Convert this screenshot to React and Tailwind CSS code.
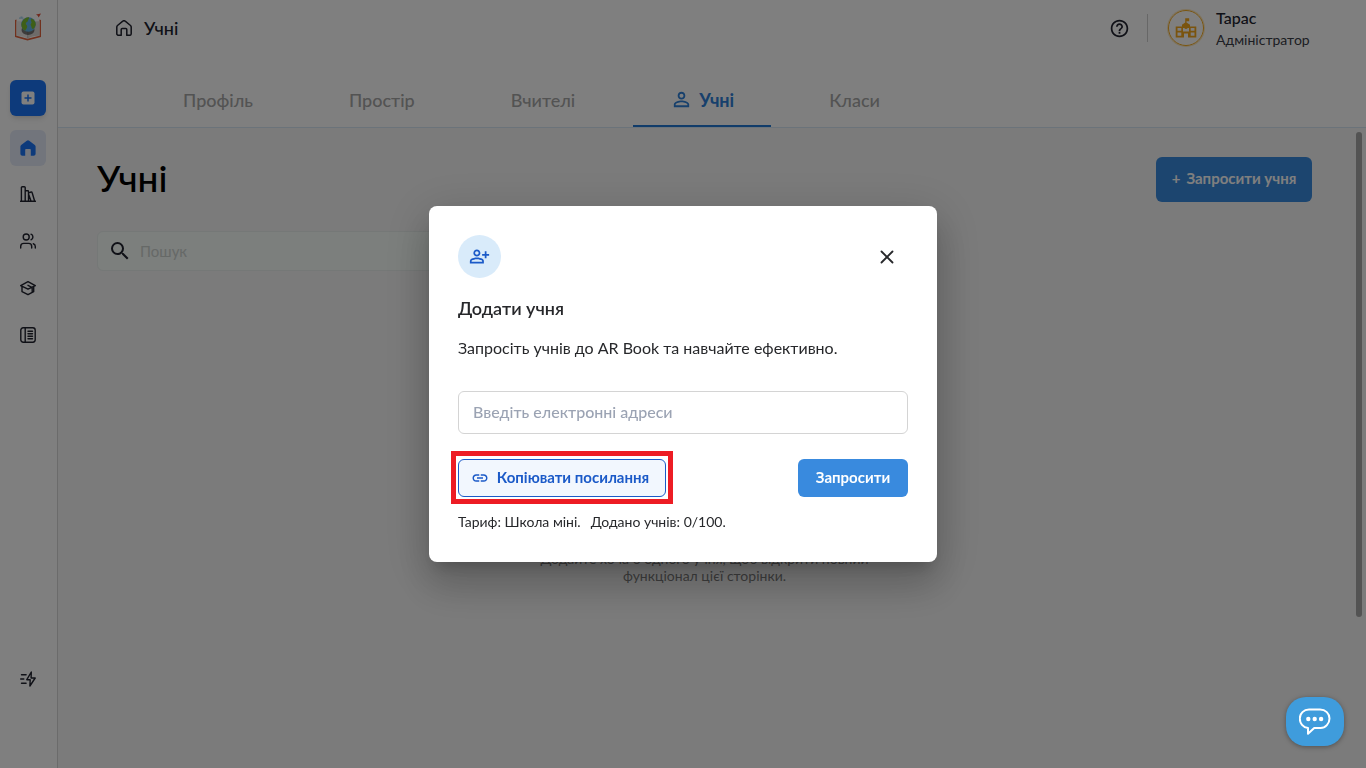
import React from 'react';
import { X } from 'lucide-react';
import {
  MdHelpOutline,
  MdLink,
  MdOutlinePersonAddAlt,
  MdPersonOutline,
  MdSearch,
} from 'react-icons/md';

function Logo() {
  return (
    <svg className="size-7" viewBox="0 0 28 28" aria-hidden="true">
      <path d="M1 7v17l12.500 3.500L27 24V7l-1.500-.5v16.300L13.500 25.800 2.500 22.800V6.500z" fill="#e2633c" />
      <path d="M2.500 8.500c4-.6 8 .5 11.200 3v14C10.500 23.500 6.500 22.300 2.500 22.800z" fill="#ece8e6" />
      <path d="M25.500 8.500c-4-.6-8.500.5-11.800 3v14c3.300-2 7.500-3.200 11.800-2.700z" fill="#dcd6d3" />
      <path d="M13.700 16v9.500" stroke="#b5aeaa" strokeWidth=".8" />
      <ellipse cx="14" cy="17" rx="6.500" ry="5" fill="#4a4a4a" opacity=".7" />
      <circle cx="14.500" cy="11.500" r="7.300" fill="#63b4e6" />
      <path d="M8 9c1.500-3 4-4.700 7-4.800.5 1.500-1 2-1 3.300 0 1.500-2 1.500-2.200 3-.2 1.300 1.700 1.500 1.400 3.300-.2 1.500-1.200 2.500-2 4C8 16 6.500 12.500 8 9z" fill="#7fbf2e" />
      <path d="M17.500 5.500c2.500 1 4.500 3.500 4.200 6.500-1 1.500-1 3.500-3 4-1.500-.5-1-2.500-2-3.700-.6-1.500 1.300-2 .8-3.300-.5-1-1.300-2 0-3.500z" fill="#7fbf2e" />
      <path d="M22 1.500l5-1-2.300 4-.9-1.800z" fill="#e2523c" />
      <path d="M5 5.200h4.500M6.500 4.200h2" stroke="#a9d3ea" strokeWidth="1.200" />
    </svg>
  );
}

function Line({ className = 'size-4', children, width = 1.4 }) {
  return (
    <svg
      className={className}
      viewBox="0 0 16 16"
      fill="none"
      stroke="currentColor"
      strokeWidth={width}
      strokeLinecap="round"
      strokeLinejoin="round"
      aria-hidden="true"
    >
      {children}
    </svg>
  );
}

const HOUSE =
  'M.8 7c0-.6.3-1.100.7-1.500L6.800 1.200c.7-.6 1.700-.6 2.400 0l5.300 4.300c.4.400.7.900.7 1.500v6.700c0 .9-.7 1.600-1.600 1.600h-2.800V9.500c0-.6-.4-1-1-1H6.200c-.6 0-1 .4-1 1v5.800H2.400c-.9 0-1.600-.7-1.600-1.600z';

const HomeSolid = () => (
  <svg className="size-4" viewBox="0 0 16 16" fill="currentColor" aria-hidden="true">
    <path d="M6.800.7a2 2 0 0 1 2.400 0l5.600 4.300c.5.400.8 1 .8 1.600v7.200c0 1.100-.9 2-2 2h-2.800V10c0-.6-.4-1-1-1H6.200c-.6 0-1 .4-1 1v5.800H2.400c-1.100 0-2-.9-2-2V6.600c0-.6.3-1.200.8-1.600z" />
  </svg>
);

const Books = () => (
  <Line>
    <path d="M.6 15.300h14.800M1.400 15V1.600c0-.5.4-.9.9-.9h2c.5 0 .9.400.9.900V15M5.200 4.700h2.600c.4 0 .7.300.7.700V15M8.600 6.800l2.600-.8c.4-.1.800.1.900.5L14.600 15M8.700 8.500l2.200 6.300" />
  </Line>
);

const Users = () => (
  <Line>
    <circle cx="6.200" cy="4" r="3" />
    <path d="M.7 15v-1.600c0-1.700 1.300-3 3-3h5c1.700 0 3 1.300 3 3V15M11 1.200a3 3 0 0 1 0 5.600M13.300 10.700c1.200.3 2 1.400 2 2.700V15" />
  </Line>
);

const Cap = () => (
  <Line>
    <path d="M.7 5.700 8 1.700l7.300 4L8 9.200zM2 6.500v5.200l6 3 5.700-3V6.500M8 5.300l4.200 2.200v4.200" />
  </Line>
);

const Journal = () => (
  <Line>
    <rect x=".8" y=".8" width="14.400" height="14.400" rx="2.400" />
    <path d="M5.200 1v14M8 4.300h4.500M8 6.800h4.500M8 9.300h4.500M8 11.800h4.500" />
  </Line>
);

const Bolt = () => (
  <Line>
    <path d="M11.300 1 6.800 8.700h3.400L9.900 15l5.300-8h-4.100zM1.500 3.700h4.600M.7 8h3.100M1.500 12.300h4.600" />
  </Line>
);

const School = () => (
  <svg className="size-[22px]" viewBox="0 0 22 22" fill="currentColor" aria-hidden="true">
    <path
      d="M10.200 1.200h4v3h-2.700v1.300L15 7.800v1.600h6.300v11h-8.300v-4H9v4H.7v-11H7V7.800l3.200-2.300zM2.500 11v2.800h3.800V11zm0 4.600v3.100h3.800v-3.100zM8 11v3.600h6V11h-1.300a1.900 1.900 0 0 1-3.400 0zm7.700 0v2.800h3.800V11zm0 4.600v3.100h3.800v-3.100z"
      fillRule="evenodd"
    />
  </svg>
);

const navItems = [
  { label: 'Бібліотека', icon: Books },
  { label: 'Користувачі', icon: Users },
  { label: 'Навчання', icon: Cap },
  { label: 'Журнал', icon: Journal },
];

const tabs = ['Профіль', 'Простір', 'Вчителі', 'Учні', 'Класи'];

function Sidebar() {
  return (
    <aside className="flex w-[58px] shrink-0 flex-col items-center border-r border-[#d6d6d6] pt-[13px] pr-px pb-[71px] text-[#20222e]">
      <a href="#" aria-label="AR Book">
        <Logo />
      </a>
      <button
        type="button"
        aria-label="Створити"
        className="mt-[39px] grid size-9 shrink-0 place-items-center rounded-md bg-[#1a75f7] text-[#1a75f7] shadow-md"
      >
        <svg className="size-3.5" viewBox="0 0 14 14" aria-hidden="true">
          <rect x=".5" y=".5" width="13" height="13" rx="2" fill="#fff" />
          <path d="M7 3.500v7M3.500 7h7" stroke="currentColor" strokeWidth="1.500" />
        </svg>
      </button>
      <a
        href="#"
        aria-label="Головна"
        className="mt-3.5 grid size-9 place-items-center rounded-md bg-[#e4eaf8] text-[#1a75f7]"
      >
        <HomeSolid />
      </a>
      <nav className="mt-2.5 flex flex-col gap-[11px]">
        {navItems.map(({ label, icon: Icon }) => (
          <a key={label} href="#" aria-label={label} className="grid size-9 place-items-center">
            <Icon />
          </a>
        ))}
      </nav>
      <a href="#" aria-label="Оновлення" className="mt-auto grid size-9 place-items-center">
        <Bolt />
      </a>
    </aside>
  );
}

function Header() {
  return (
    <header className="border-b border-[#d6e6f5]">
      <div className="flex h-14 items-center justify-between pr-[54px] pl-[58px] text-[#20222e]">
        <div className="flex items-center gap-3">
          <Line width={1.5}>
            <path d={HOUSE} />
          </Line>
          <span className="text-lg font-medium">Учні</span>
        </div>
        <div className="flex items-center">
          <button type="button" aria-label="Допомога">
            <MdHelpOutline className="size-[21px]" />
          </button>
          <span className="ml-[17px] h-7 w-px bg-[#cfcfcf]" />
          <span className="ml-5 grid size-9 place-items-center rounded-full border border-[#f5ab1f] text-[#f5a81c] ring-1 ring-[#f5ab1f]/30">
            <School />
          </span>
          <div className="ml-3 min-w-24 pb-px leading-[22px]">
            <div className="text-base font-medium">Тарас</div>
            <div className="text-sm text-[#3a3c46]">Адміністратор</div>
          </div>
        </div>
      </div>
      <nav className="flex h-[71px] gap-5 pl-[87px] text-lg font-medium text-[#a6a6a6]">
        {tabs.map((tab) =>
          tab === 'Учні' ? (
            <a
              key={tab}
              href="#"
              aria-current="page"
              className="flex items-center gap-1.5 border-b-2 border-[#2278d4] px-[37px] pt-8 pb-3.5 font-bold text-[#2f80d8]"
            >
              <MdPersonOutline className="size-[23px]" />
              {tab}
            </a>
          ) : (
            <a key={tab} href="#" className="flex items-center px-[38px] pt-8 pb-4">
              {tab}
            </a>
          ),
        )}
      </nav>
    </header>
  );
}

function Students() {
  return (
    <main className="relative flex-1 bg-[#f6f6f6] pt-[29px] pr-[54px] pl-[39px]">
      <div className="flex h-[45px] items-center justify-between">
        <h1 className="pb-1 text-[37px] leading-10 font-medium text-black">Учні</h1>
        <button
          type="button"
          className="flex h-[45px] w-[156px] items-center justify-center gap-1.5 rounded-md bg-[#398ade] pb-0.5 text-[15px] font-bold text-white"
        >
          <span>+</span>
          Запросити учня
        </button>
      </div>
      <label className="mt-[29px] flex h-10 w-[500px] items-center gap-2 rounded-md border border-[#eaf0ee] bg-[#f8fefb] pl-2.5 text-[#20222e]">
        <MdSearch className="size-6" aria-hidden="true" />
        <input
          type="search"
          aria-label="Пошук"
          placeholder="Пошук"
          className="min-w-0 flex-1 bg-transparent text-[15px] outline-none placeholder:text-[#cdd2cf]"
        />
      </label>
      <p className="mx-auto mt-[279px] w-[360px] text-center text-sm leading-[17px] text-[#7d7d7d]">
        Додайте хоча б одного учня, щоб відкрити повний функціонал цієї сторінки.
      </p>
      <span className="absolute top-1 right-1 h-[485px] w-1.5 rounded-full bg-[#a6a6a6]" />
    </main>
  );
}

function InviteDialog() {
  return (
    <div className="fixed inset-0 grid place-items-center bg-black/50">
      <section
        role="dialog"
        aria-modal="true"
        aria-labelledby="invite-title"
        className="w-full max-w-[508px] rounded-lg bg-white p-[29px] text-[#27282b] shadow-[0_11px_15px_-7px_rgba(0,0,0,0.2),0_24px_38px_3px_rgba(0,0,0,0.14),0_9px_46px_8px_rgba(0,0,0,0.12)]"
      >
        <div className="flex items-center justify-between">
          <span className="grid size-[43px] place-items-center rounded-full bg-[#d9ebfa] text-[#1b5ac8]">
            <MdOutlinePersonAddAlt className="size-[21px]" />
          </span>
          <button type="button" aria-label="Закрити" className="mr-2.5">
            <X className="size-[22px]" strokeWidth={2} />
          </button>
        </div>
        <h2 id="invite-title" className="mt-[18px] text-lg leading-6 font-semibold">
          Додати учня
        </h2>
        <p className="mt-4 text-base leading-6">
          Запросіть учнів до AR Book та навчайте ефективно.
        </p>
        <input
          type="email"
          aria-label="Електронні адреси"
          placeholder="Введіть електронні адреси"
          className="mt-[31px] block h-[43px] w-full rounded-md border border-[#d4d4d4] px-3.5 pb-0.5 text-base font-medium outline-none placeholder:text-[#9ba3b3]"
        />
        <div className="mt-[25px] flex h-[38px] justify-between">
          <div className="relative">
            <button
              type="button"
              className="flex h-full w-[208px] items-center justify-center gap-2 rounded-md border border-[#1b5ac8] bg-[#f2f7fe] pr-1 text-[15px] font-bold text-[#1b5ac8]"
            >
              <MdLink className="size-[18px]" />
              <span className="pb-0.5">Копіювати посилання</span>
            </button>
            <span className="pointer-events-none absolute -inset-x-[7px] -top-2 -bottom-[7px] border-5 border-[#ed1c24]" />
          </div>
          <button
            type="button"
            className="w-[110px] rounded-md bg-[#398ade] pb-0.5 text-[15px] font-bold text-white"
          >
            Запросити
          </button>
        </div>
        <p className="mt-3.5 mb-px flex gap-2.5 text-sm leading-[21px]">
          <span>Тариф: Школа міні.</span>
          <span>Додано учнів: 0/100.</span>
        </p>
      </section>
    </div>
  );
}

function ChatButton() {
  return (
    <button
      type="button"
      aria-label="Чат"
      className="fixed right-[22px] bottom-[22px] grid h-[49px] w-[58px] place-items-center rounded-[20px] bg-[#3f9cdc] text-white shadow-[0_1px_5px_rgba(0,0,0,0.35)]"
    >
      <svg className="h-7 w-8" viewBox="0 0 32 28" fill="none" aria-hidden="true">
        <path
          d="M10 1.500h11C26.500 1.500 30.500 5.500 30.500 10.500s-4 9.500-9 9.500h-6.300L9 25.800V20C4 19.500.8 15.300.8 10.500c0-5 4-9 9.200-9z"
          stroke="currentColor"
          strokeWidth="2"
          strokeLinejoin="round"
        />
        <g fill="currentColor">
          <circle cx="9.300" cy="11" r="2.200" />
          <circle cx="15.700" cy="11" r="2.200" />
          <circle cx="22.100" cy="11" r="2.200" />
        </g>
      </svg>
    </button>
  );
}

export default function App() {
  return (
    <div className="flex min-h-screen bg-white font-[Lato,sans-serif]">
      <Sidebar />
      <div className="flex min-w-0 flex-1 flex-col">
        <Header />
        <Students />
      </div>
      <InviteDialog />
      <ChatButton />
    </div>
  );
}
